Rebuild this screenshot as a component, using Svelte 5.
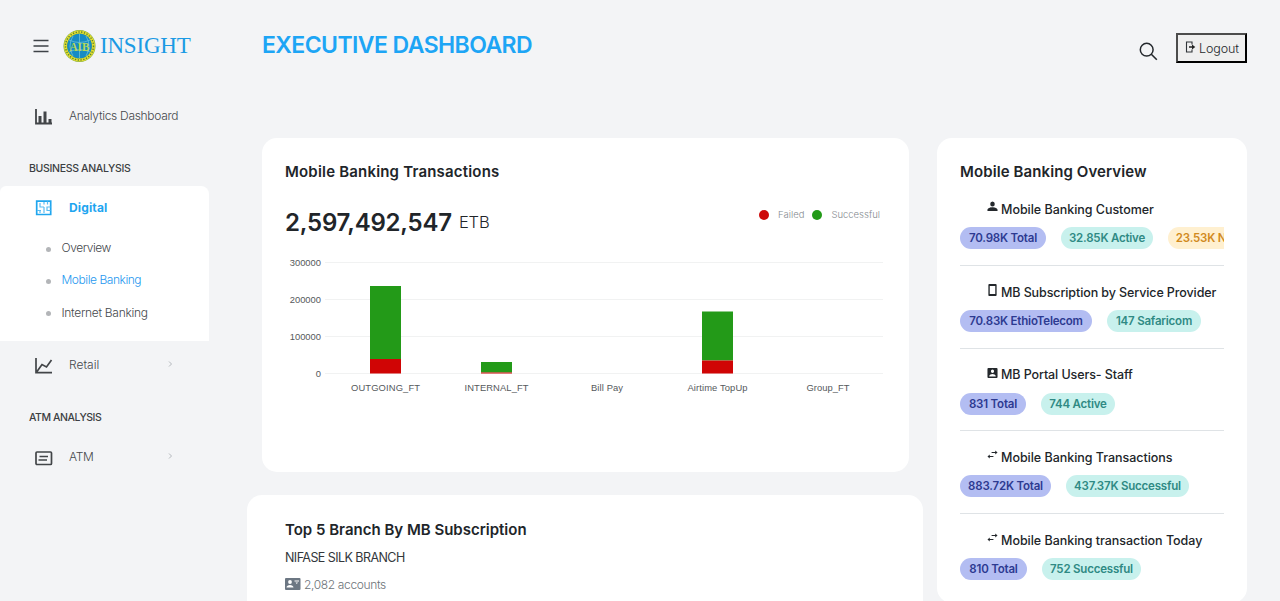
<script>
  const overview = [
    { icon: 'person', title: 'Mobile Banking Customer', pills: [['70.98K Total', 'blue', 86], ['32.85K Active', 'teal', 92], ['23.53K New', 'amber', 82]] },
    { icon: 'phone', title: 'MB Subscription by Service Provider', pills: [['70.83K EthioTelecom', 'blue', 132], ['147 Safaricom', 'teal', 94]] },
    { icon: 'badge', title: 'MB Portal Users- Staff', pills: [['831 Total', 'blue', 66], ['744 Active', 'teal', 74]] },
    { icon: 'swap', title: 'Mobile Banking Transactions', pills: [['883.72K Total', 'blue', 91], ['437.37K Successful', 'teal', 123]] },
    { icon: 'swap', title: 'Mobile Banking transaction Today', pills: [['810 Total', 'blue', 67], ['752 Successful', 'teal', 99]] },
  ];

  const icons = {
    person: 'M12 11a5 5 0 1 0 0-10 5 5 0 0 0 0 10zM1 20v-2.500c0-3.300 7-5 11-5s11 1.700 11 5V20z',
    phone: 'M19 0H5a2 2 0 0 0-2 2v20c0 1.100.9 2 2 2h14a2 2 0 0 0 2-2V2a2 2 0 0 0-2-2zm-1 20H6V4h12z',
    badge: 'M1 4v16a2 2 0 0 0 2 2h18a2 2 0 0 0 2-2V4a2 2 0 0 0-2-2H3a2 2 0 0 0-2 2zm14.500 4.500a3.500 3.500 0 1 1-7 0 3.500 3.500 0 0 1 7 0zM5 18c0-2.500 4.500-4 7-4s7 1.500 7 4v1H5z',
    swap: 'M23 7l-5-4v3h-8v2h8v3zM1 15l5 4v-3h8v-2H6v-3z',
  };

  const ticks = [
    { label: '300000', y: 8 },
    { label: '200000', y: 45 },
    { label: '100000', y: 82 },
    { label: '0', y: 119 },
  ];
  const columns = [
    { label: 'OUTGOING_FT', cx: 100.5, w: 69, top: 31, split: 104 },
    { label: 'INTERNAL_FT', cx: 211.5, w: 64, top: 107, split: 117.5 },
    { label: 'Bill Pay', cx: 322, w: 32 },
    { label: 'Airtime TopUp', cx: 432.5, w: 60, top: 56.5, split: 105.5 },
    { label: 'Group_FT', cx: 543, w: 43 },
  ];
</script>

<div class="page">
  <aside>
    <div class="brand">
      <svg class="burger" width="16" height="14" viewBox="0 0 16 14"><path d="M.5 1.500h15M.5 7h15M.5 12.500h15" stroke="#3e4247" stroke-width="1.300" /></svg>
      <svg class="logo" width="33" height="34" viewBox="0 0 33 34">
        <circle cx="16.500" cy="17" r="16" fill="#79a63c" />
        <circle cx="16.500" cy="17" r="14" fill="none" stroke="#e5df2f" stroke-width="3" />
        <circle cx="16.500" cy="17" r="14" fill="none" stroke="#5b8435" stroke-width="1.500" stroke-dasharray="1.300 1.500" />
        <circle cx="16.500" cy="17" r="12.300" fill="#168bc4" />
        <path d="M6 11q10.500 5 21 0M6 23q10.500-5 21 0M16.500 5v24M10 7q-6 10 0 20M23 7q6 10 0 20" fill="none" stroke="#6cc2d4" stroke-width=".8" />
        <text x="16.500" y="21.500" text-anchor="middle" textLength="20" lengthAdjust="spacingAndGlyphs">AIB</text>
      </svg>
      <span class="word">INSIGHT</span>
    </div>

    <a class="item first">
      <svg width="20" height="18" viewBox="0 0 20 18"><path d="M2 1v14.500h16" fill="none" stroke="#424548" stroke-width="1.800" /><path d="M4.500 8h3v8h-3zM9.500 3.500h3V16h-3zM14.500 11h3v5h-3z" fill="#424548" /></svg>
      <span class="analytics">Analytics Dashboard</span>
    </a>

    <h4 class="business">BUSINESS ANALYSIS</h4>
    <div class="group">
      <a class="item active">
        <svg width="20" height="18" viewBox="0 0 20 18"><path d="M2.700 2.200h14v13.300h-14z" fill="none" stroke="#20a6ee" stroke-width="1.700" /><path d="M6 4v4h4M10 3v2.500M10 8v6M3 11.500h4M13 8h3.500M13 7.500v4h3.500M6 11.500V14M13.500 5.500v-3" fill="none" stroke="#5cbdf2" stroke-width="1.200" /></svg>
        <span>Digital</span>
      </a>
      <ul>
        <li class="ov">Overview</li>
        <li class="mb">Mobile Banking</li>
        <li class="ib">Internet Banking</li>
      </ul>
    </div>
    <a class="item retail">
      <svg width="20" height="18" viewBox="0 0 20 18"><path d="M2 1v14.700h16M3 14.500l5-7 4.500 2.500L17.500 3" fill="none" stroke="#424548" stroke-width="1.700" /></svg>
      <span>Retail</span>
      <svg class="chev" width="6" height="8" viewBox="0 0 6 8"><path d="M1 1.500l2.500 2.500L1 6.500" fill="none" stroke="#b4b8bd" /></svg>
    </a>
    <h4 class="atmhead">ATM ANALYSIS</h4>
    <a class="item atm">
      <svg width="20" height="18" viewBox="0 0 20 18"><rect x="2" y="3" width="15.500" height="12.500" rx="1" fill="none" stroke="#424548" stroke-width="1.700" /><path d="M5.500 7.500H14M4.500 11H13" stroke="#424548" stroke-width="1.500" /></svg>
      <span>ATM</span>
      <svg class="chev" width="6" height="8" viewBox="0 0 6 8"><path d="M1 1.500l2.500 2.500L1 6.500" fill="none" stroke="#b4b8bd" /></svg>
    </a>
  </aside>

  <main>
    <header>
      <h1>EXECUTIVE DASHBOARD</h1>
      <svg class="search" width="19" height="19" viewBox="0 0 19 19"><circle cx="7.700" cy="7.700" r="6.400" fill="none" stroke="#24282d" stroke-width="1.500" /><path d="M12.300 12.300l5.500 5.500" stroke="#24282d" stroke-width="1.600" /></svg>
      <button>
        <svg width="11" height="12" viewBox="0 0 11 12"><path d="M7 3.500V1H1.500v10H7V8.500" fill="none" stroke="#303438" stroke-width="1.100" /><path d="M4 5.200h3V3.500L10.300 6 7 8.500V6.800H4z" fill="#222" /></svg>
        <span>Logout</span>
      </button>
    </header>

    <div class="columns">
      <div class="left">
        <section class="card tx">
          <h2 class="t1">Mobile Banking Transactions</h2>
          <div class="summary">
            <strong>2,597,492,547</strong><span class="unit">ETB</span>
            <div class="legend"><i class="red"></i><span>Failed</span><i class="green"></i><span class="ok">Successful</span></div>
          </div>
          <svg class="chart" width="600" height="145" viewBox="0 0 600 145">
            {#each ticks as t}
              <line x1="40" x2="598" y1={t.y - 0.5} y2={t.y - 0.5} stroke="#f1f2f2" />
              <text x="36" y={t.y + 2.5} text-anchor="end">{t.label}</text>
            {/each}
            {#each columns as c}
              {#if c.top}
                <rect x={c.cx - 15.5} y={c.top} width="31" height={c.split - c.top} fill="#239a18" />
                <rect x={c.cx - 15.5} y={c.split} width="31" height={118.5 - c.split} fill="#d00505" />
              {/if}
              <text x={c.cx} y="136" text-anchor="middle" textLength={c.w}>{c.label}</text>
            {/each}
          </svg>
        </section>

        <section class="card top">
          <h2 class="t2">Top 5 Branch By MB Subscription</h2>
          <p class="branch">NIFASE SILK BRANCH</p>
          <p class="accounts">
            <svg width="16" height="12" viewBox="0 0 16 12"><rect width="15.500" height="12" rx="1" fill="#6c7783" /><circle cx="5" cy="4" r="1.900" fill="#fff" /><path d="M1.500 9.500c0-3.500 7-3.500 7 0zM9.500 2.500h4.500v1H9.500zM10.500 4.500H13L11.800 6z" fill="#fff" /></svg>
            <span>2,082 accounts</span>
          </p>
        </section>
      </div>

      <section class="card over">
        <h2 class="t3">Mobile Banking Overview</h2>
        {#each overview as o}
          <div class="entry">
            <h3 class={o.icon}><svg width="11" height="12" viewBox="0 0 24 24" preserveAspectRatio="none"><path d={icons[o.icon]} fill="#24282c" fill-rule="evenodd" /></svg><span>{o.title}</span></h3>
            <div class="pills">
              {#each o.pills as [text, tone, width]}
                <span class="pill {tone}" style="width:{width}px">{text}</span>
              {/each}
            </div>
          </div>
        {/each}
      </section>
    </div>
  </main>
</div>

<style>
  :global(body) { margin: 0; background: #f3f4f6; overflow: hidden; }
  .page { box-sizing: border-box; width: 1280px; height: 601px; overflow: hidden; display: flex; font-family: Inter, sans-serif; background: #f3f4f6; color: #212529; }
  h1, h2, h3, h4, p, ul { margin: 0; padding: 0; }
  span, strong, h1, h2, h4, li { white-space: nowrap; }
  svg { flex: none; display: block; }
  aside { width: 209px; flex: none; }
  .brand { height: 91px; box-sizing: border-box; padding-left: 33px; display: flex; align-items: center; }
  .logo { margin: 1px 4px 0 14px; }
  .logo text { font: 700 13px "Liberation Serif", serif; fill: #b5d75a; }
  .word { font: 23px/28px "Liberation Serif", serif; color: #1b9ae4; letter-spacing: -0.2px; }
  .item { display: flex; align-items: center; padding-left: 34px; height: 34px; font-size: 12px; font-weight: 300; color: #45484c; }
  .item > span { margin-left: 15px; }
  .item > svg:first-child { margin-top: 3px; }
  .first { margin-top: 7px; }
  .analytics { letter-spacing: -0.3px; }
  h4 { font-size: 10.500px; font-weight: 500; line-height: 16px; padding-left: 29px; color: #3b3e42; letter-spacing: -0.32px; }
  .business { margin-top: 29px; }
  .group { background: #fff; margin-top: 9px; height: 155px; border-radius: 6px 8px 0 0; }
  .active { height: 42px; color: #1ea5f0; font-weight: 700; letter-spacing: 0.15px; }
  .active > svg:first-child { margin-top: 1px; }
  ul { list-style: none; padding-top: 3.500px; }
  li { display: flex; align-items: center; height: 32.300px; padding-left: 46px; font-size: 12px; font-weight: 300; color: #45484c; letter-spacing: -0.3px; }
  li::before { content: ""; width: 5px; height: 5px; border-radius: 50%; background: #b3b5b8; margin: 3px 10.500px 0 0; }
  li.ov { letter-spacing: -0.45px; }
  li.mb { color: #2698ef; letter-spacing: -0.45px; }
  .retail { margin-top: 6px; }
  .item .chev { margin: 0 35px 0 auto; }
  .atmhead { margin-top: 29px; letter-spacing: -0.45px; }
  .atm { margin-top: 13px; letter-spacing: -0.4px; }

  main { width: 1000px; margin-left: 38px; }
  header { height: 138px; box-sizing: border-box; display: flex; align-items: flex-start; padding: 33px 0 0 15px; }
  h1 { font-size: 23px; font-weight: 600; line-height: 24px; color: #1da5f5; letter-spacing: -0.57px; }
  .search { margin: 9px 18px 0 auto; }
  button { box-sizing: border-box; width: 71px; height: 30px; padding: 0 0 0 7px; display: flex; align-items: center; border: 2px solid; border-color: #4c4c4c #000 #000 #4c4c4c; background: #efefef; font: 300 12.500px Inter, sans-serif; color: #24282c; gap: 3px; letter-spacing: -0.1px; }
  button svg { margin-top: -3px; }
  .columns { display: flex; justify-content: space-between; align-items: flex-start; }
  .left { width: 676px; }
  .card { background: #fff; border-radius: 15px; box-sizing: border-box; }
  .tx { margin-left: 15px; width: 647px; height: 334px; padding: 22px 23px 0; }
  h2 { font-size: 15px; font-weight: 600; line-height: 23px; height: 22px; color: #212529; }
  .t1 { letter-spacing: 0.19px; }
  .t3 { letter-spacing: 0.1px; }
  .summary { display: flex; align-items: center; height: 32px; margin-top: 24px; }
  .summary strong { font-size: 24px; font-weight: 600; letter-spacing: -0.2px; }
  .unit { font-size: 16.500px; font-weight: 300; margin-left: 7px; letter-spacing: -0.1px; }
  .legend { margin: -15px 3px 0 auto; display: flex; align-items: center; font-size: 9.500px; color: #858a8f; font-weight: 300; padding-right: 3px; }
  .legend i { width: 10px; height: 10px; border-radius: 50%; }
  .legend span { margin: 0 8px 0 9px; }
  .legend .ok { margin-right: 0; }
  .red { background: #cd0808; }
  .green { background: #239a18; }
  .chart { margin-top: 17px; }
  .chart text { font: 9.400px "Liberation Sans", Arial, sans-serif; fill: #55595c; }
  .top { margin-top: 23px; height: 200px; padding: 23px 37px 0 38px; }
  .branch { font-size: 12.500px; line-height: 18px; font-weight: 400; color: #33373b; margin-top: 9px; letter-spacing: -0.56px; }
  .accounts { display: flex; align-items: center; font-size: 12px; line-height: 18px; margin-top: 9px; gap: 3px; font-weight: 300; color: #6d7379; letter-spacing: -0.35px; }
  .accounts svg { margin-top: -3px; }

  .over { width: 310px; height: 465px; padding: 22px 23px 0; }
  .entry { box-sizing: border-box; height: 82.700px; padding-top: 18px; border-bottom: 1px solid #dfe3e6; overflow: hidden; }
  .entry:first-of-type { height: 84px; padding-top: 19px; }
  .entry:last-child { border-bottom: 0; }
  h3 { display: flex; align-items: center; height: 16px; padding-left: 27px; gap: 3px; font-size: 12.500px; font-weight: 500; color: #212529; letter-spacing: -0.03px; }
  h3.phone { letter-spacing: -0.1px; }
  h3.badge { letter-spacing: -0.1px; }
  h3 svg { margin-top: -4px; }
  .pills { display: flex; gap: 15px; margin-top: 10px; }
  .pill { flex: none; box-sizing: border-box; height: 22px; line-height: 22px; border-radius: 11px; text-align: center; font-size: 11.500px; font-weight: 600; letter-spacing: -0.2px; }
  .blue { background: #b3bdf2; color: #2d3a91; }
  .teal { background: #c8f1ed; color: #2f8a84; }
  .amber { background: #fff0d0; color: #d18a1d; }
</style>
